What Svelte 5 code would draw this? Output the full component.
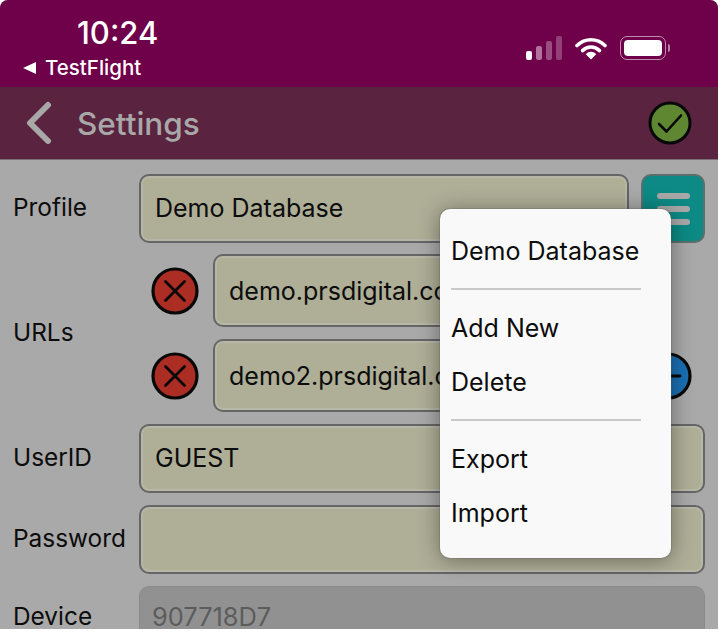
<script lang="ts">
  const menu = [
    { label: 'Demo Database', divider: true },
    { label: 'Add New', divider: false },
    { label: 'Delete', divider: true },
    { label: 'Export', divider: false },
    { label: 'Import', divider: false }
  ];
  const urls = ['demo.prsdigital.com.au', 'demo2.prsdigital.com.au'];
</script>

<div class="screen">
  <header class="status">
    <div class="status-left">
      <div class="time">10:24</div>
      <div class="back-app"><span class="tri"></span>TestFlight</div>
    </div>
    <div class="status-right">
      <svg class="signal" width="36" height="24" viewBox="0 0 36 24" aria-hidden="true">
        <rect x="0" y="15" width="6" height="9" rx="2" fill="#fff" />
        <rect x="10" y="10" width="6" height="14" rx="2" fill="#fff" opacity="0.45" />
        <rect x="20" y="5" width="6" height="19" rx="2" fill="#fff" opacity="0.3" />
        <rect x="30" y="0" width="6" height="24" rx="2" fill="#fff" opacity="0.25" />
      </svg>
      <svg class="wifi" width="32" height="24" viewBox="0 0 32 24" aria-hidden="true">
        <path d="M2 9.5C10 1.8 22 1.8 30 9.5" fill="none" stroke="#fff" stroke-width="3.6" stroke-linecap="round" />
        <path d="M7.5 14.6C12.6 9.8 19.4 9.8 24.5 14.6" fill="none" stroke="#fff" stroke-width="3.6" stroke-linecap="round" />
        <path d="M10.8 18.2C14 15 18 15 21.2 18.2L16 23.6Z" fill="#fff" />
      </svg>
      <div class="battery"><div class="level"></div></div>
      <div class="nub"></div>
    </div>
  </header>

  <nav class="nav">
    <svg class="chevron" width="28" height="44" viewBox="0 0 28 44" aria-hidden="true">
      <path d="M23 4L5 22L23 40" fill="none" stroke="#a8a8a8" stroke-width="6" stroke-linecap="round" stroke-linejoin="round" />
    </svg>
    <span class="title">Settings</span>
    <svg class="ok" width="44" height="44" viewBox="0 0 44 44" aria-hidden="true">
      <circle cx="22" cy="22" r="20" fill="#5f8631" stroke="#080808" stroke-width="3" />
      <path d="M11 23L18.5 30.5L33 14.5" fill="none" stroke="#080808" stroke-width="2.6" stroke-linecap="round" stroke-linejoin="round" />
    </svg>
  </nav>

  <main class="form">
    <div class="label">Profile</div>
    <div class="row">
      <div class="field">Demo Database</div>
      <div class="menu-btn">
        <span></span><span></span><span></span>
      </div>
    </div>

    <div class="label urls-label">URLs</div>
    <div class="urls">
      {#each urls as url, i}
        <div class="row url-row">
          <svg class="round" width="48" height="48" viewBox="0 0 48 48" aria-hidden="true">
            <circle cx="24" cy="24" r="22" fill="#ab2d24" stroke="#080808" stroke-width="3.2" />
            <path d="M14.5 14.5L33.5 33.5M33.5 14.5L14.5 33.5" stroke="#080808" stroke-width="2.8" stroke-linecap="round" />
          </svg>
          <div class="field url">{url}</div>
          {#if i === 1}
            <svg class="round minus" width="48" height="48" viewBox="0 0 48 48" aria-hidden="true">
              <circle cx="24" cy="24" r="22" fill="#1a6fb2" stroke="#080808" stroke-width="3.2" />
              <path d="M12 24H36" stroke="#080808" stroke-width="2.8" stroke-linecap="round" />
            </svg>
          {:else}
            <div class="minus-gap"></div>
          {/if}
        </div>
      {/each}
    </div>

    <div class="label">UserID</div>
    <div class="field">GUEST</div>

    <div class="label">Password</div>
    <div class="field"></div>

    <div class="label device">Device</div>
    <div class="field disabled">907718D7</div>
  </main>

  <div class="popup">
    {#each menu as item}
      <div class="item">{item.label}</div>
      {#if item.divider}
        <div class="divider"></div>
      {/if}
    {/each}
  </div>
</div>

<style>
  :global(body) {
    background: #fff;
    margin: 0;
  }

  .screen {
    position: relative;
    width: 718px;
    height: 629px;
    overflow: hidden;
    background: #a9a9a9;
    border-radius: 8px 8px 0 0;
    font-family: Inter, "Noto Sans", sans-serif;
    color: #0c0c0c;
  }

  .status {
    height: 87px;
    box-sizing: border-box;
    background: #6f004a;
    color: #fff;
    display: flex;
    justify-content: space-between;
  }

  .status-left {
    padding: 15px 0 0 23px;
  }

  .time {
    margin-left: 54px;
    font-size: 31px;
    line-height: 36px;
    font-weight: 500;
  }

  .back-app {
    display: flex;
    align-items: center;
    gap: 9px;
    margin-top: 5px;
    font-size: 20.5px;
    line-height: 24px;
    font-weight: 500;
  }

  .tri {
    width: 0;
    height: 0;
    border-top: 6px solid transparent;
    border-bottom: 6px solid transparent;
    border-right: 13px solid #fff;
  }

  .status-right {
    display: flex;
    align-items: center;
    height: 24px;
    margin: 36px 48px 0 0;
  }

  .wifi {
    margin-left: 13px;
  }

  .battery {
    margin-left: 13px;
    width: 46px;
    height: 24px;
    box-sizing: border-box;
    padding: 3px;
    border: 1.5px solid rgba(255, 255, 255, 0.55);
    border-radius: 7px;
  }

  .level {
    height: 100%;
    background: #fff;
    border-radius: 4px;
  }

  .nub {
    width: 2px;
    height: 8px;
    margin-left: 2px;
    background: rgba(255, 255, 255, 0.5);
    border-radius: 0 2px 2px 0;
  }

  .nav {
    height: 73px;
    box-sizing: border-box;
    display: flex;
    align-items: center;
    padding: 0 26px 0 25px;
    background: #5a2340;
    border-bottom: 1px solid #7a6f76;
  }

  .chevron {
    flex: none;
  }

  .title {
    margin-left: 24px;
    flex: 1;
    font-size: 31.5px;
    font-weight: 500;
    color: #a8a8a8;
  }

  .form {
    display: grid;
    grid-template-columns: 126px 1fr;
    row-gap: 12px;
    align-items: center;
    padding: 14px 13px 0 13px;
  }

  .label {
    font-size: 24.4px;
    line-height: 30px;
    padding-bottom: 4px;
  }

  .device {
    position: relative;
    top: -3px;
  }

  .row {
    display: flex;
    align-items: center;
    gap: 12px;
  }

  .field {
    flex: 1;
    min-width: 0;
    height: 69px;
    box-sizing: border-box;
    padding: 0 14px 2px;
    display: flex;
    align-items: center;
    white-space: nowrap;
    overflow: hidden;
    font-size: 25px;
    background: #afae97;
    border: 2px solid #666;
    border-radius: 10px;
    box-shadow: inset 0 0 0 2px #b7b7a8;
  }

  .url {
    height: 73px;
    padding-bottom: 0;
  }

  .disabled {
    background: #919191;
    border: 1px solid #8a8a8a;
    box-shadow: none;
    color: #5c5c5c;
    padding: 0 12px 9px;
    font-size: 25.4px;
  }

  .menu-btn {
    flex: none;
    width: 64px;
    height: 69px;
    box-sizing: border-box;
    display: flex;
    flex-direction: column;
    align-items: center;
    justify-content: center;
    gap: 7px;
    background: #0d8a85;
    border: 2px solid #5c6f6e;
    border-radius: 10px;
  }

  .menu-btn span {
    width: 33px;
    height: 6px;
    border-radius: 3px;
    background: #a8a8a8;
  }

  .urls {
    display: flex;
    flex-direction: column;
    gap: 12px;
    margin-top: -1px;
  }

  .url-row {
    gap: 14px;
    padding-left: 12px;
  }

  .round {
    flex: none;
  }

  .minus {
    margin-right: 13px;
    margin-left: -2px;
  }

  .minus-gap {
    flex: none;
    width: 59px;
  }

  .popup {
    position: absolute;
    left: 440px;
    top: 209px;
    width: 231px;
    height: 349px;
    box-sizing: border-box;
    padding: 15px 30px 0 11px;
    background: #f9f9f9;
    border-radius: 10px;
    box-shadow: 0 0 0 1px rgba(90, 90, 90, 0.25), 0 2px 22px rgba(0, 0, 0, 0.4);
    font-size: 25px;
  }

  .item {
    height: 54px;
    line-height: 54px;
    white-space: nowrap;
  }

  .divider {
    height: 2px;
    margin: 10px 0 11px;
    background: #c9c9c9;
  }
</style>
